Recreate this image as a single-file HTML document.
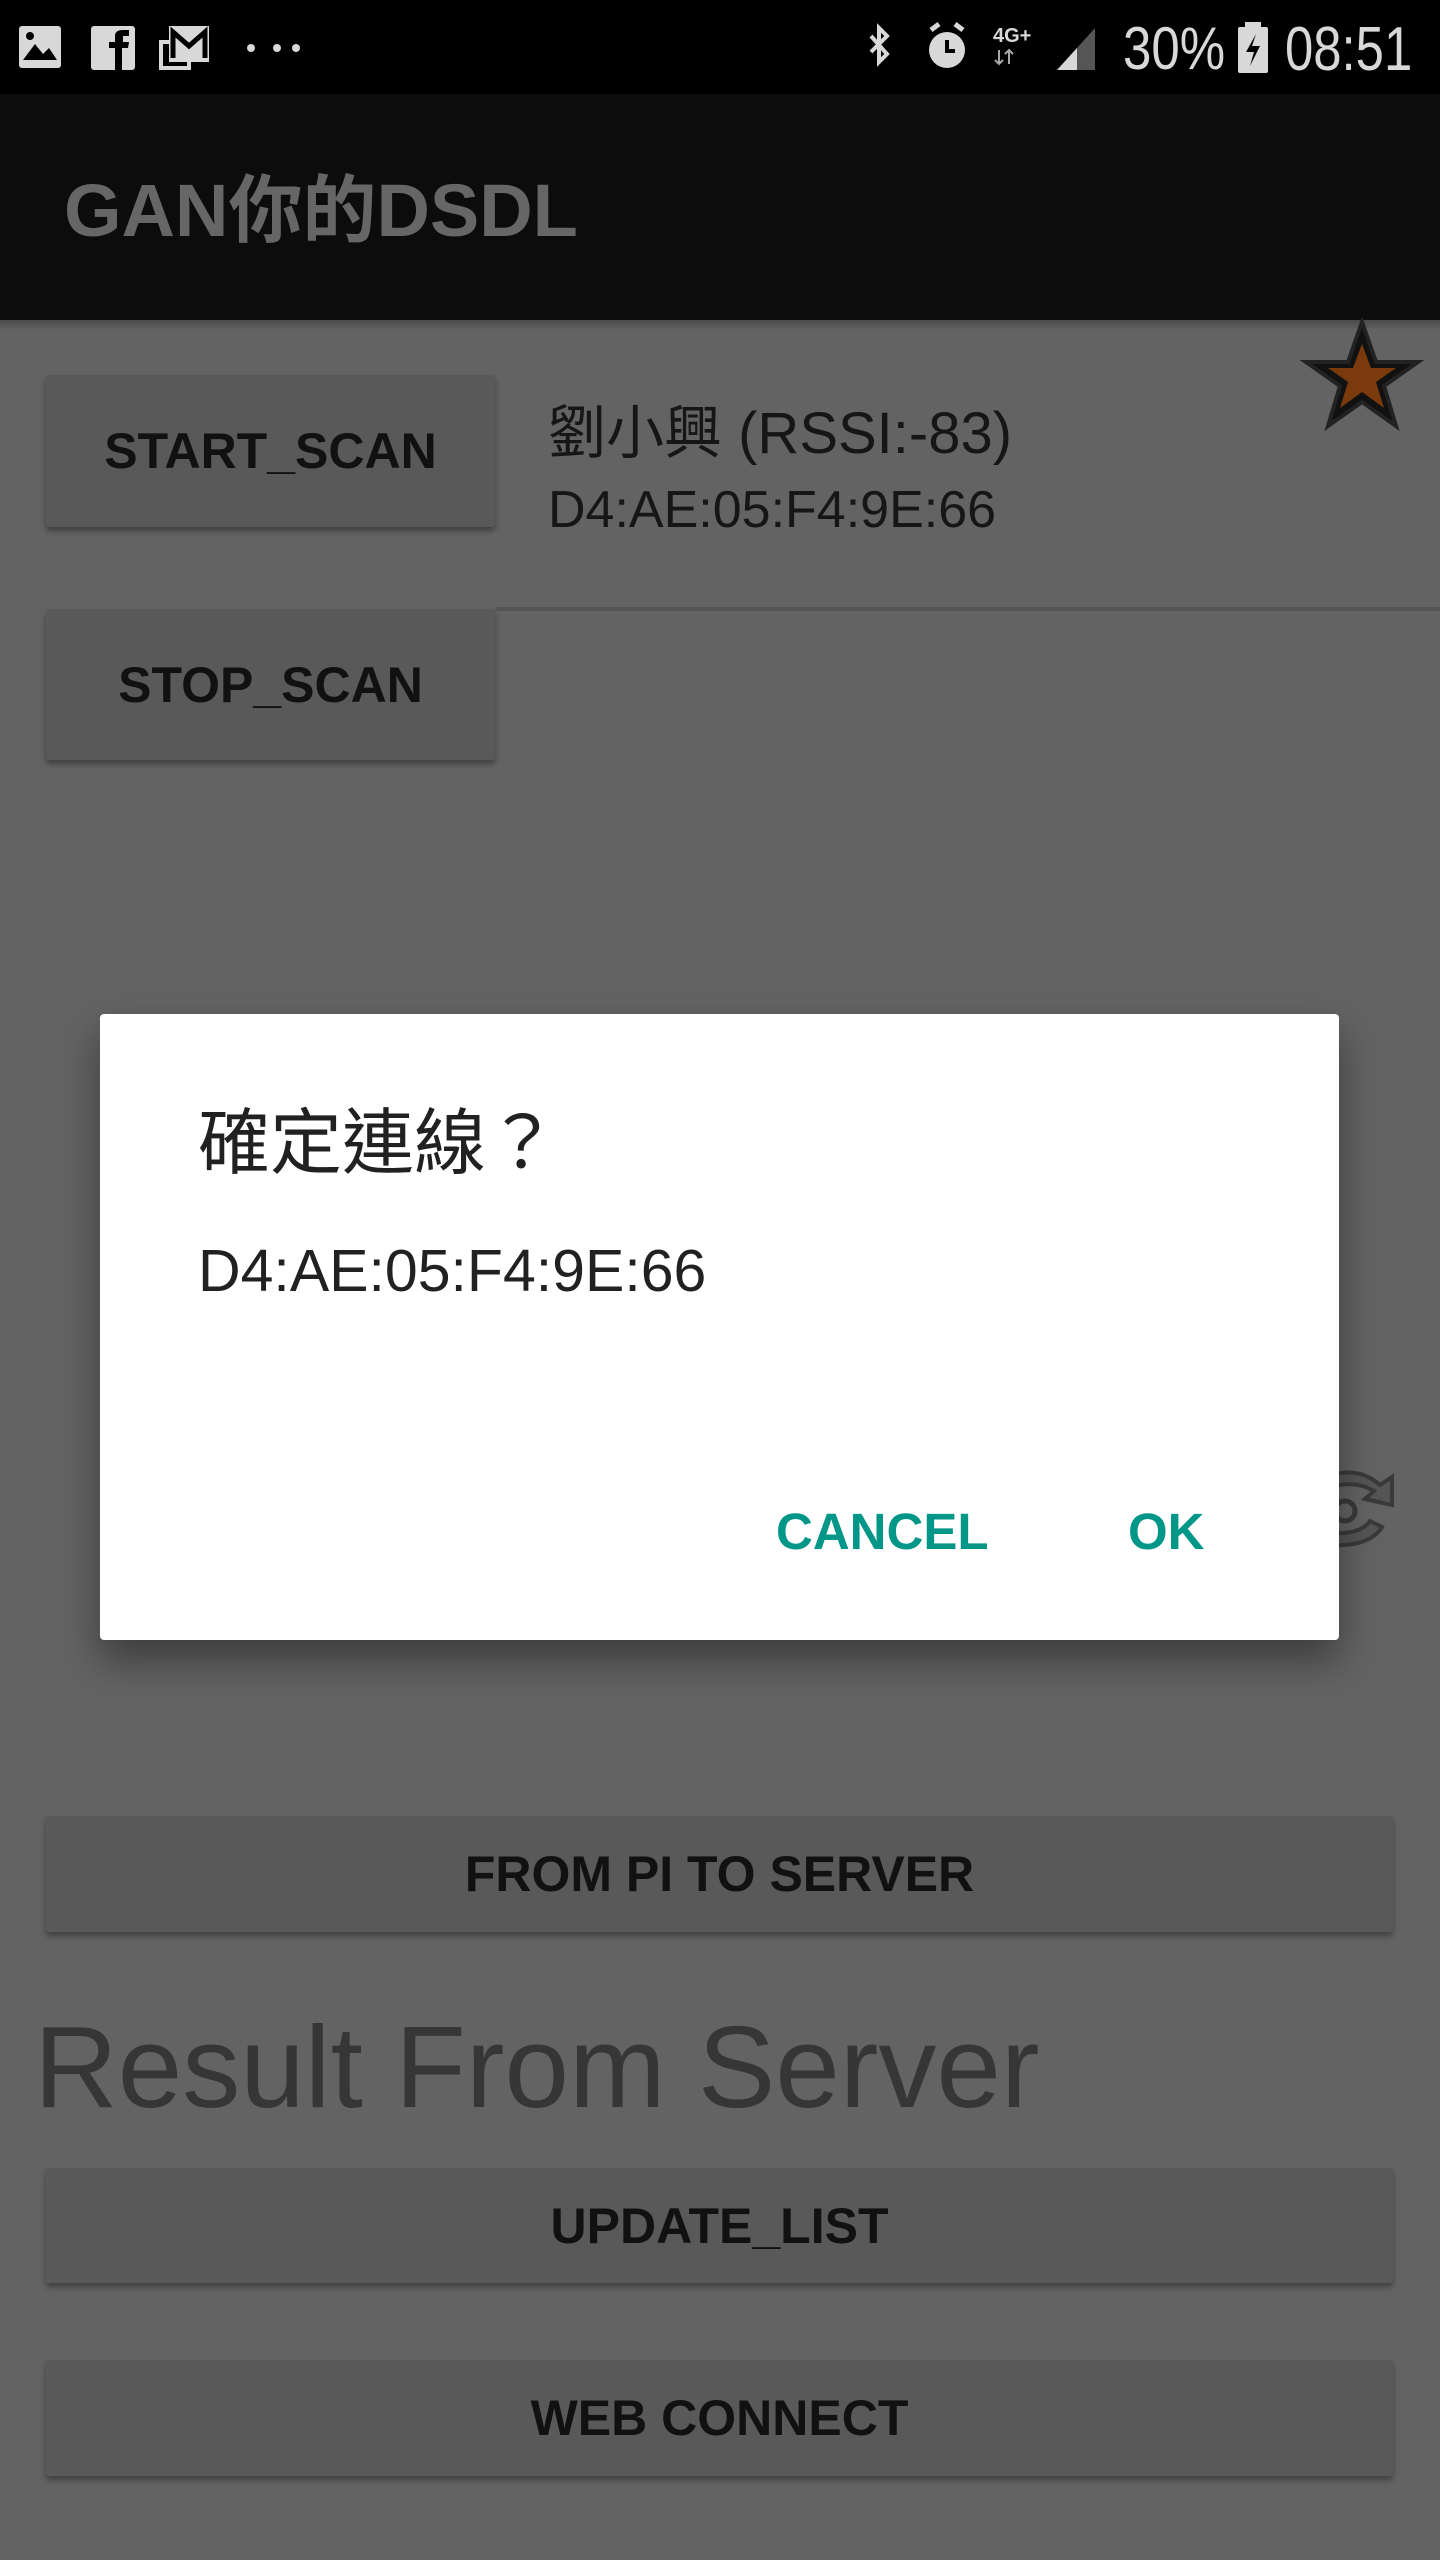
<!DOCTYPE html>
<html><head><meta charset="utf-8"><style>
*{margin:0;padding:0;box-sizing:border-box}
body{width:1440px;height:2560px;background:#636363;position:relative;overflow:hidden;font-family:"Liberation Sans","Noto Sans CJK TC",sans-serif}
.abs{position:absolute}
.btn{position:absolute;background:#595959;box-shadow:0 4px 6px rgba(0,0,0,.35);border-radius:3px;color:#111;font-weight:bold;font-size:50px;display:flex;align-items:center;justify-content:center}
.st{color:#d8d8d8}
</style></head><body>
<div class="abs" style="left:0;top:0;width:1440px;height:94px;background:#000"></div>
<svg class="abs" style="left:15px;top:22px" width="300" height="50" viewBox="0 0 300 50">
<rect x="4" y="4" width="42" height="42" rx="3" fill="#d8d8d8"/><path d="M8 38 L20 22 L28 32 L34 26 L42 38 Z" fill="#000"/><circle cx="15" cy="14" r="4" fill="#000"/>
<rect x="76" y="4" width="44" height="44" rx="3" fill="#d8d8d8"/><path d="M100 48 V26 H94 V20 H100 V14 Q100 8 108 8 H114 V14 H108 V20 H114 L113 26 H107 V48 Z" fill="#000"/>
<rect x="146" y="20" width="28" height="26" fill="none" stroke="#d8d8d8" stroke-width="4"/><rect x="154" y="4" width="40" height="36" fill="#d8d8d8"/><path d="M158 36 V10 L174 24 L190 10 V36" fill="none" stroke="#000" stroke-width="5"/>
<circle cx="236" cy="26" r="4" fill="#d8d8d8"/><circle cx="262" cy="26" r="4" fill="#d8d8d8"/><circle cx="281" cy="26" r="4" fill="#d8d8d8"/>
</svg>
<svg class="abs" style="left:865px;top:20px" width="260" height="56" viewBox="0 0 260 56">
<path d="M6 16 L22 34 L14 42 V8 L22 16 L6 32" fill="none" stroke="#d8d8d8" stroke-width="4"/>
<circle cx="82" cy="30" r="18" fill="#d8d8d8"/><path d="M82 20 V31 H90" stroke="#000" stroke-width="4" fill="none"/><path d="M66 10 L74 4 M98 10 L90 4" stroke="#d8d8d8" stroke-width="5"/>
<text x="128" y="22" font-size="20" font-weight="bold" fill="#d8d8d8" font-family="Liberation Sans">4G+</text>
<path d="M134 30 V44 M130 40 L134 44 L138 40 M144 44 V30 M140 34 L144 30 L148 34" stroke="#aaa" stroke-width="2" fill="none"/>
<path d="M192 50 L230 8 V50 Z" fill="#555"/><path d="M192 50 L212 28 V50 Z" fill="#d8d8d8"/>
</svg>
<div class="abs st" style="left:1123px;top:14px;font-size:60px;transform:scaleX(.85);transform-origin:left">30%</div>
<svg class="abs" style="left:1236px;top:22px" width="34" height="54" viewBox="0 0 34 54"><rect x="9" y="0" width="16" height="6" fill="#d8d8d8"/><rect x="2" y="5" width="30" height="46" rx="2" fill="#d8d8d8"/><path d="M20 12 L10 30 H18 L14 44 L24 24 H16 Z" fill="#000"/></svg>
<div class="abs st" style="left:1285px;top:14px;font-size:62px;transform:scaleX(.82);transform-origin:left">08:51</div>
<div class="abs" style="left:0;top:94px;width:1440px;height:226px;background:#0c0c0c"></div>
<div class="abs" style="left:64px;top:170px;font-size:74px;font-weight:bold;color:#666;line-height:1.1">GAN你的DSDL</div>
<div class="abs" style="left:0;top:320px;width:1440px;height:10px;background:linear-gradient(rgba(0,0,0,.25),rgba(0,0,0,0))"></div>
<div class="btn" style="left:46px;top:375px;width:449px;height:152px">START_SCAN</div>
<div class="btn" style="left:46px;top:609px;width:449px;height:151px">STOP_SCAN</div>
<div class="abs" style="left:548px;top:386px;font-size:58px;color:#161616">劉小興 (RSSI:-83)</div>
<div class="abs" style="left:548px;top:480px;font-size:52px;color:#161616">D4:AE:05:F4:9E:66</div>
<div class="abs" style="left:495px;top:607px;width:945px;height:4px;background:#555"></div>
<svg class="abs" style="left:1300px;top:318px" width="124" height="114" viewBox="0 0 124 114"><path d="M62 4 L76 44 L118 44 L84 68 L96 108 L62 84 L28 108 L40 68 L6 44 L48 44 Z" fill="#111" stroke="#222" stroke-width="4"/><path d="M62 26 L71 50 L96 50 L76 64 L84 90 L62 74 L40 90 L48 64 L28 50 L53 50 Z" fill="#7a3a0c"/></svg>
<svg class="abs" style="left:1330px;top:1455px" width="70" height="100" viewBox="0 0 70 100"><path d="M0 20 Q30 12 50 30 L62 22 L62 50 L35 44 L44 36 Q25 25 0 32" fill="#555" stroke="#3a3a3a" stroke-width="4"/><path d="M0 90 Q40 92 52 72 L40 66 Q30 80 0 78" fill="#555" stroke="#3a3a3a" stroke-width="4"/><circle cx="15" cy="56" r="10" fill="none" stroke="#3a3a3a" stroke-width="5"/></svg>
<div class="abs" style="left:100px;top:1014px;width:1239px;height:626px;background:#fff;border-radius:4px;box-shadow:0 20px 40px rgba(0,0,0,.4)">
<div class="abs" style="left:98px;top:94px;font-size:72px;color:#212121;line-height:1">確定連線？</div>
<div class="abs" style="left:98px;top:228px;font-size:59px;color:#212121;line-height:1">D4:AE:05:F4:9E:66</div>
<div class="abs" style="left:676px;top:492px;font-size:51px;font-weight:bold;color:#009688;line-height:1">CANCEL</div>
<div class="abs" style="left:1028px;top:492px;font-size:51px;font-weight:bold;color:#009688;line-height:1">OK</div>
</div>
<div class="btn" style="left:46px;top:1816px;width:1347px;height:116px">FROM PI TO SERVER</div>
<div class="abs" style="left:34px;top:1998px;font-size:116px;color:#363636;line-height:1.2">Result From Server</div>
<div class="btn" style="left:46px;top:2168px;width:1347px;height:115px">UPDATE_LIST</div>
<div class="btn" style="left:46px;top:2360px;width:1347px;height:116px">WEB CONNECT</div>
</body></html>
